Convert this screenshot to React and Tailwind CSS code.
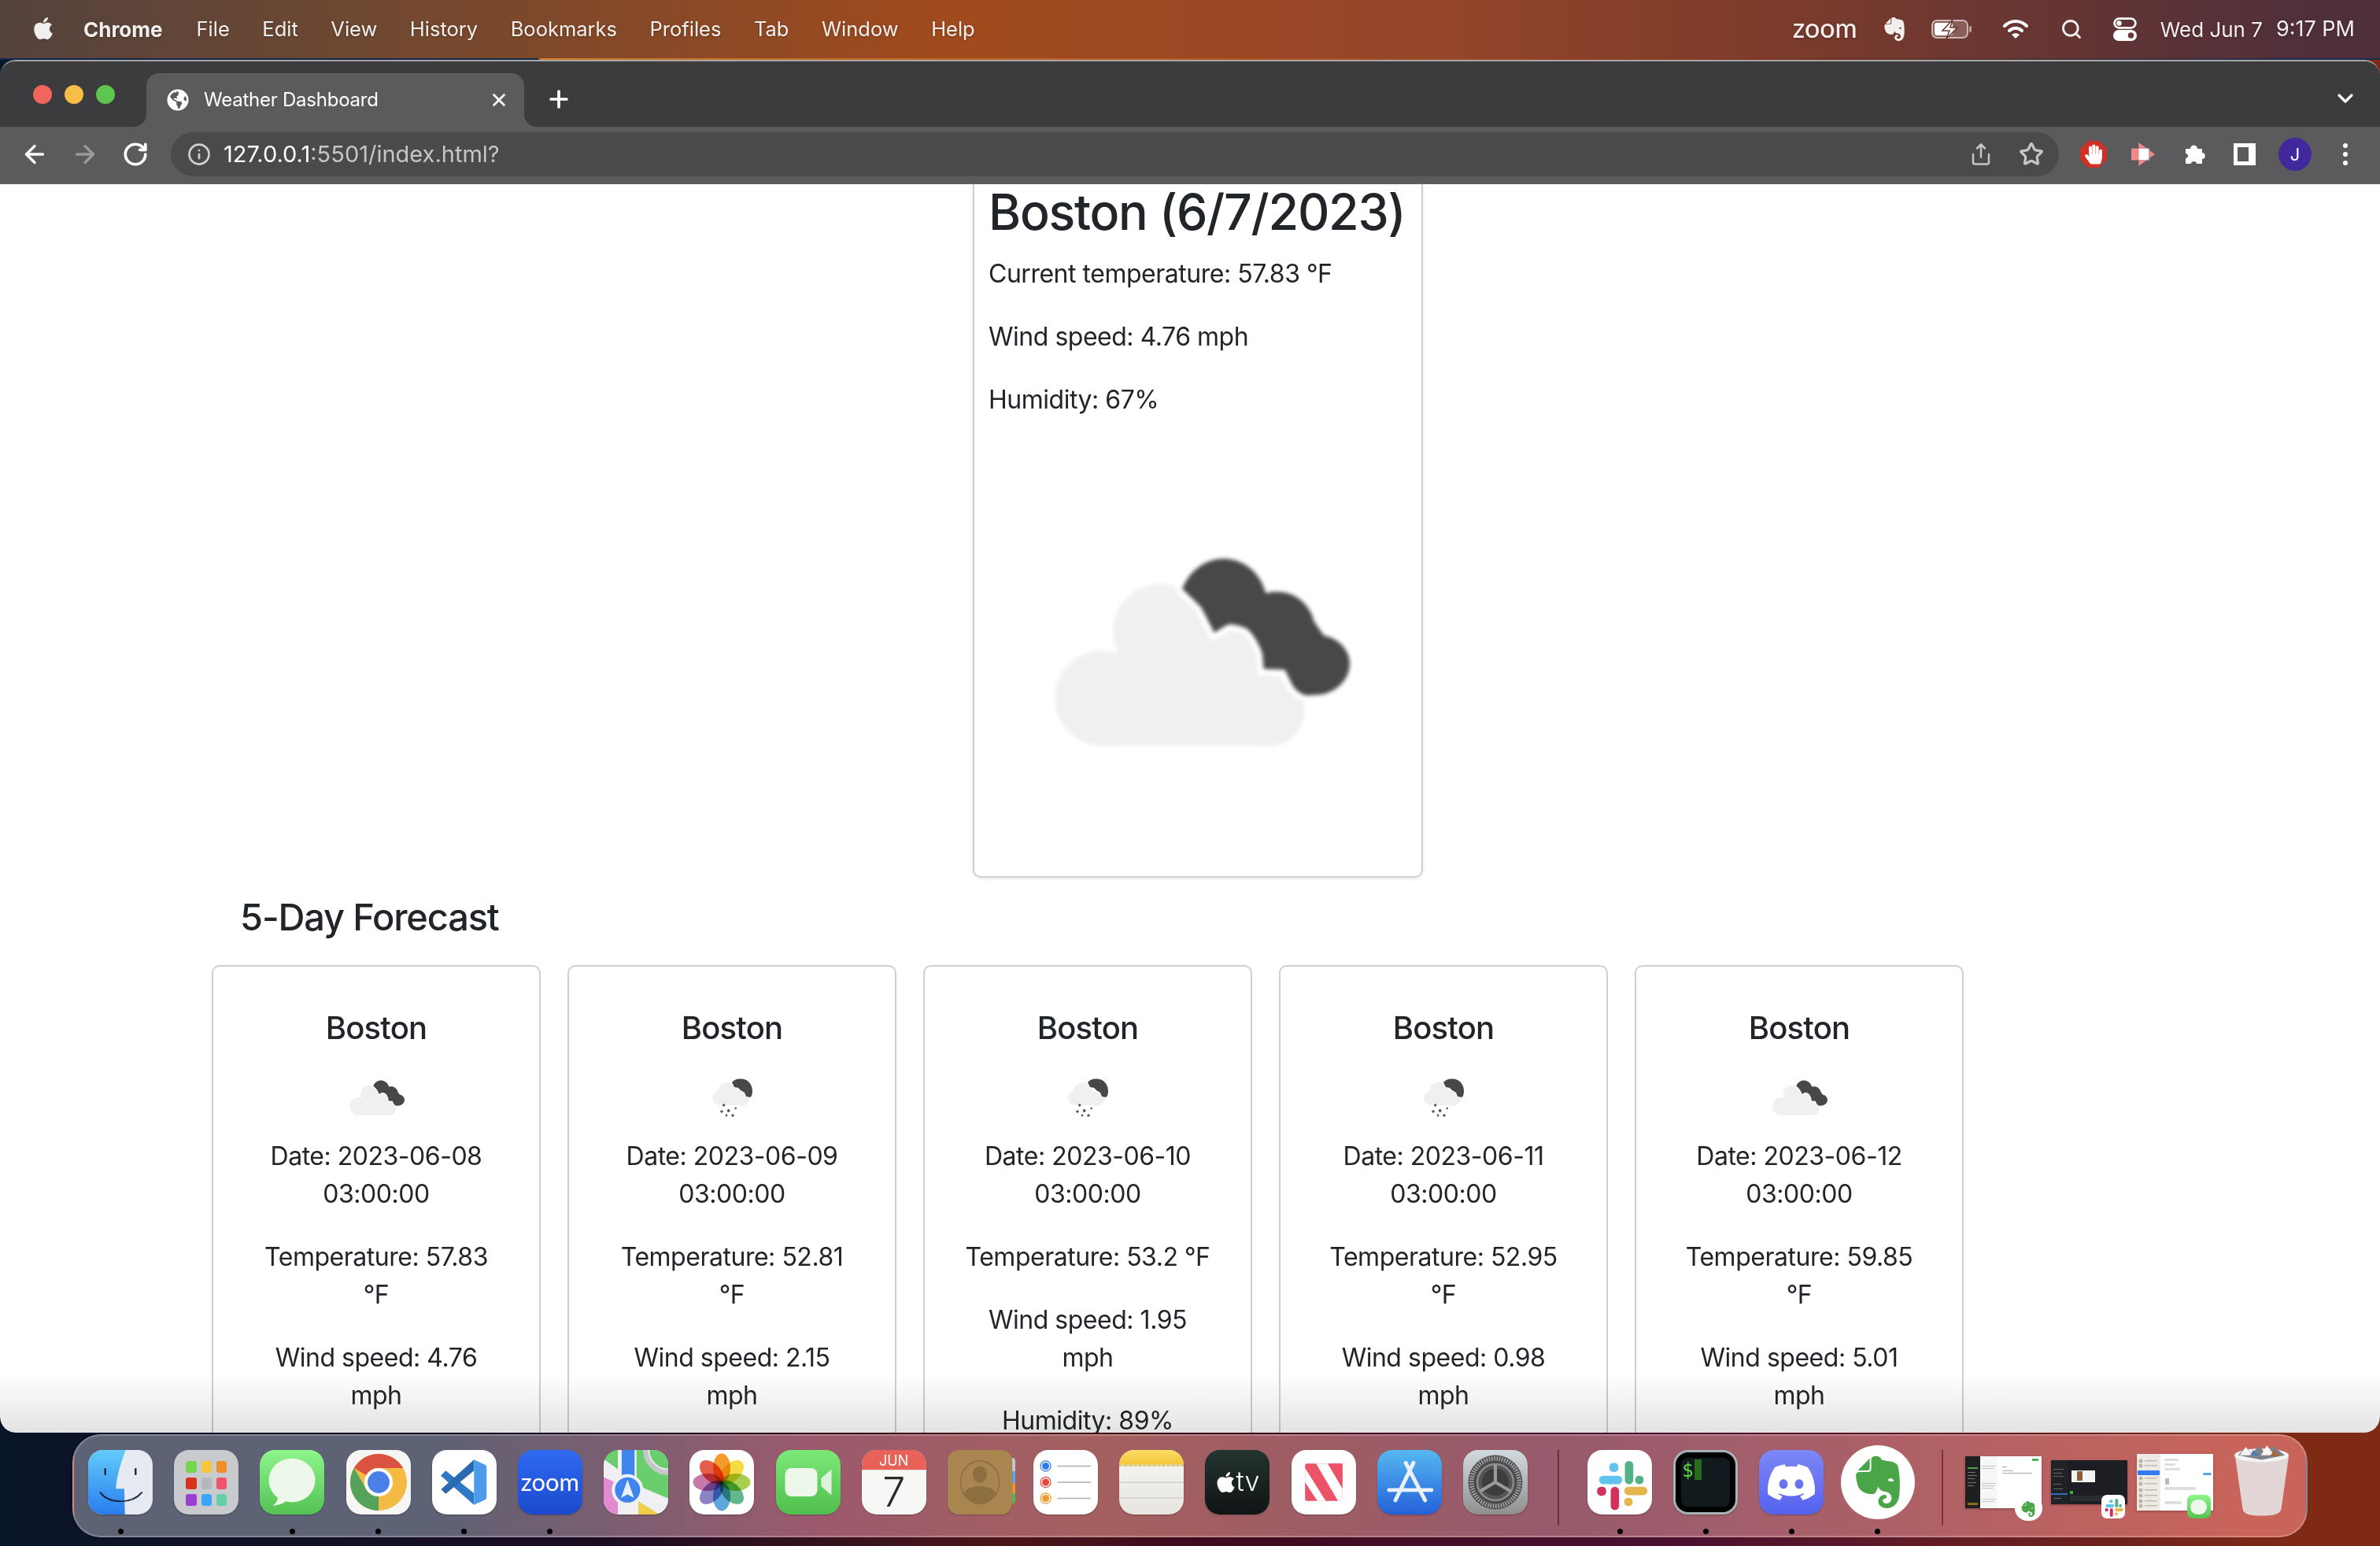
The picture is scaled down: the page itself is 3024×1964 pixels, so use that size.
import React from "react";
import {
  ArrowLeft,
  ArrowRight,
  RotateCw,
  Info,
  Share,
  Star,
  Plus,
  X,
  ChevronDown,
  Search,
} from "lucide-react";
import { FaApple, FaHandPaper, FaGlobeAmericas } from "react-icons/fa";
import { SiEvernote, SiDiscord } from "react-icons/si";

const forecast = [
  { date: "2023-06-08", temp: "57.83", wind: "4.76", humidity: "64", rain: false },
  { date: "2023-06-09", temp: "52.81", wind: "2.15", humidity: "88", rain: true },
  { date: "2023-06-10", temp: "53.2", wind: "1.95", humidity: "89", rain: true },
  { date: "2023-06-11", temp: "52.95", wind: "0.98", humidity: "91", rain: true },
  { date: "2023-06-12", temp: "59.85", wind: "5.01", humidity: "71", rain: false },
];

const menus = ["File", "Edit", "View", "History", "Bookmarks", "Profiles", "Tab", "Window", "Help"];

const DARK_CLOUD =
  "M46.3 34.5C48 30 52 27.4 56.2 27.4C61 27.4 65 31 66.1 35.6C68 35 70 35.2 71.4 35.6C74.5 36.5 77 39.5 77.5 42.2L79.8 45.5C84 46.5 86 49.5 86 52.1C86 56 83 59 79 59.6L76 59.8C74.5 59.6 73.5 58.8 72.5 57.5L70.6 53.7L65.6 53.5L65.3 49.9C64.5 47.5 63 45 61.5 43.9C59.5 43 57.5 42.8 56.9 43.1L53.9 44.9L50.8 38.9Z";

function CloudsIcon({ className }) {
  return (
    <svg viewBox="0 0 100 100" className={className}>
      <g fill="#f0f0f0">
        <circle cx="27.4" cy="60.5" r="11.3" />
        <circle cx="41" cy="44.5" r="11.1" />
        <circle cx="56" cy="54" r="10" />
        <circle cx="67" cy="63.5" r="8.3" />
        <rect x="27" y="50" width="40" height="21.8" />
      </g>
      <path d={DARK_CLOUD} fill="#fff" stroke="#fff" strokeWidth="3" />
      <path d={DARK_CLOUD} fill="#48484a" />
    </svg>
  );
}

function RainIcon({ className }) {
  const moon = "M50 30C53 26 58 25 62 25.5C71 26 76 33 76 41C76 45 75 48 73 49L68 48L66 43L61 40L58 37L53 36Z";
  return (
    <svg viewBox="0 0 100 100" className={className}>
      <g fill="#f0f0f0">
        <circle cx="34" cy="50" r="9" />
        <circle cx="44" cy="42" r="12" />
        <circle cx="62" cy="50" r="10" />
        <rect x="34" y="44" width="28" height="15" />
      </g>
      <path d={moon} fill="#fff" stroke="#fff" strokeWidth="2" />
      <path d={moon} fill="#48484a" />
      <g fill="#5a5a5c">
        <circle cx="39.7" cy="59" r="1.7" />
        <circle cx="37" cy="67" r="1.8" />
        <circle cx="45.7" cy="66" r="1.9" />
        <circle cx="54.7" cy="63" r="1.3" />
        <circle cx="43" cy="72" r="1.4" />
        <circle cx="51" cy="72" r="1.8" />
      </g>
    </svg>
  );
}

function MenuBar() {
  return (
    <div className="h-[74px] shrink-0 flex items-center pl-[40px] pr-[32px] text-[#f3efee] text-[25.5px] [text-shadow:0_1px_3px_rgba(0,0,0,0.3)] bg-[linear-gradient(90deg,#54423d_0%,#6e4831_15%,#a14a1d_40%,#95452a_60%,#7b3b2b_75%,#4e2f3b_98%)]">
      <FaApple className="w-[30px] h-[32px] mb-[3px]" />
      <span className="ml-[36px] mr-[43px] font-bold text-[26px]">Chrome</span>
      <div className="flex gap-[41.5px]">
        {menus.map((m) => (
          <span key={m}>{m}</span>
        ))}
      </div>
      <div className="flex-1" />
      <span className="text-[34px] font-medium font-['Lato',sans-serif] leading-none mb-[4px]">zoom</span>
      <SiEvernote className="ml-[32px] w-[30px] h-[32px]" />
      <svg viewBox="0 0 52 26" className="ml-[32px] w-[52px] h-[26px]">
        <rect x="1" y="2" width="45" height="22" rx="6" fill="#ffffff33" stroke="#ffffff99" strokeWidth="2" />
        <rect x="4" y="5" width="23" height="16" rx="3" fill="#fff" />
        <rect x="48" y="9" width="3" height="8" rx="1.5" fill="#ffffff88" />
        <path d="M27 1L14 15H23L19 25L33 11H24Z" fill="#fff" stroke="#6c3a30" strokeWidth="1.5" />
      </svg>
      <svg viewBox="0 0 34 26" className="ml-[38px] w-[34px] h-[26px]" fill="none" stroke="#fff" strokeWidth="4" strokeLinecap="round">
        <path d="M3 9C11 1 23 1 31 9" />
        <path d="M9 15C13.5 10.5 20.5 10.5 25 15" />
        <path d="M17 25L12 20C15 17.5 19 17.5 22 20Z" fill="#fff" stroke="none" />
      </svg>
      <Search className="ml-[40px] w-[28px] h-[28px]" strokeWidth={2.4} />
      <svg viewBox="0 0 28 28" className="ml-[39px] w-[30px] h-[30px]">
        <rect x="1.5" y="1.5" width="25" height="11" rx="5.5" fill="none" stroke="#fff" strokeWidth="2.5" />
        <circle cx="7" cy="7" r="3" fill="#fff" />
        <rect x="0" y="15" width="28" height="13" rx="6.5" fill="#fff" />
        <circle cx="21" cy="21.5" r="3.5" fill="#6b3a38" />
      </svg>
      <span className="ml-[30px] whitespace-pre text-[26px]">Wed Jun 7</span>
      <span className="ml-[17px] whitespace-pre text-[27px]">9:17 PM</span>
    </div>
  );
}

function TabStrip() {
  return (
    <div className="h-[83px] shrink-0 flex items-end pl-[42px] pr-[28px] bg-[#3c3b3e]">
      <div className="flex gap-[16px] mb-[29px]">
        <span className="w-[24px] h-[24px] rounded-full bg-[#f0665d]" />
        <span className="w-[24px] h-[24px] rounded-full bg-[#f7bd47]" />
        <span className="w-[24px] h-[24px] rounded-full bg-[#5ec551]" />
      </div>
      <div className="relative ml-[40px] w-[480px] h-[68px] rounded-t-[16px] bg-[#5b5a5d] flex items-center pl-[26px] pr-[19px] text-white">
        <span className="absolute -left-[16px] bottom-0 w-[16px] h-[16px] bg-[radial-gradient(circle_at_0_0,transparent_16px,#5b5a5d_16px)]" />
        <span className="absolute -right-[16px] bottom-0 w-[16px] h-[16px] bg-[radial-gradient(circle_at_100%_0,transparent_16px,#5b5a5d_16px)]" />
        <FaGlobeAmericas className="w-[28px] h-[28px]" />
        <span className="ml-[19px] text-[24px] tracking-[-0.01em]">Weather Dashboard</span>
        <div className="flex-1" />
        <X className="w-[26px] h-[26px]" strokeWidth={2.4} />
      </div>
      <Plus className="ml-[27px] mb-[18px] w-[34px] h-[34px] text-white" strokeWidth={2.6} />
      <div className="flex-1" />
      <ChevronDown className="mb-[20px] w-[32px] h-[32px] text-white" strokeWidth={2.4} />
    </div>
  );
}

function ToolButton({ children }) {
  return <div className="w-[64px] h-[56px] flex items-center justify-center">{children}</div>;
}

function Toolbar() {
  return (
    <div className="h-[73px] shrink-0 flex items-start pt-[7px] px-[12px] bg-[#5b5a5d] border-b-2 border-[#5f5e61]">
      <ToolButton>
        <ArrowLeft className="w-[36px] h-[36px] text-white" strokeWidth={2.2} />
      </ToolButton>
      <ToolButton>
        <ArrowRight className="w-[36px] h-[36px] text-[#9a999b]" strokeWidth={2.2} />
      </ToolButton>
      <ToolButton>
        <RotateCw className="w-[34px] h-[34px] text-white" strokeWidth={2.6} />
      </ToolButton>
      <div className="ml-[13px] flex-1 h-[56px] rounded-full bg-[#4a494c] flex items-center pl-[21px] pr-[3px]">
        <Info className="w-[30px] h-[30px] text-[#cfcfd0]" strokeWidth={2.2} />
        <span className="ml-[16px] text-[29px] text-white">
          127.0.0.1<span className="text-[#c6c6c8]">:5501/index.html?</span>
        </span>
        <div className="flex-1" />
        <ToolButton>
          <Share className="w-[30px] h-[30px] text-[#c6c6c8]" strokeWidth={2} />
        </ToolButton>
        <ToolButton>
          <Star className="w-[32px] h-[32px] text-[#c6c6c8]" strokeWidth={2.4} />
        </ToolButton>
      </div>
      <div className="ml-[12px] flex">
        <ToolButton>
          <div className="w-[34px] h-[34px] bg-[#d03026] flex items-center justify-center [clip-path:polygon(30%_0,70%_0,100%_30%,100%_70%,70%_100%,30%_100%,0_70%,0_30%)]">
            <FaHandPaper className="w-[22px] h-[26px] text-white" />
          </div>
        </ToolButton>
        <ToolButton>
          <svg viewBox="0 0 34 34" className="w-[32px] h-[32px]">
            <path d="M0 9H10V25H0Z" fill="#f08a88" />
            <path d="M10 9H24V25H10Z" fill="#fff" />
            <path d="M10 1L32 17L10 33V25H24V9H10Z" fill="#f08a88" />
          </svg>
        </ToolButton>
        <ToolButton>
          <svg viewBox="0 0 30 30" className="w-[30px] h-[30px]" fill="#fff">
            <path d="M4 8H10C10 2 19 2 19 8H25V13C30 13 30 21 25 21V27H18C18 23 11 23 11 27H4V20C8 20 8 14 4 14Z" />
          </svg>
        </ToolButton>
        <ToolButton>
          <div className="w-[28px] h-[28px] border-white border-l-[5px] border-y-[5px] border-r-[9px] bg-[#5b5a5d]" />
        </ToolButton>
        <ToolButton>
          <div className="w-[42px] h-[42px] rounded-full bg-[#41299d] text-white text-[22px] flex items-center justify-center">J</div>
        </ToolButton>
        <ToolButton>
          <div className="flex flex-col gap-[5px]">
            <span className="w-[6px] h-[6px] rounded-full bg-white" />
            <span className="w-[6px] h-[6px] rounded-full bg-white" />
            <span className="w-[6px] h-[6px] rounded-full bg-white" />
          </div>
        </ToolButton>
      </div>
    </div>
  );
}

function CurrentWeather() {
  return (
    <div className="ml-[1236px] -mt-[21px] w-[572px] h-[902px] shrink-0 border-2 border-[#cfcfcf] rounded-[10px] pt-[16px] pl-[18px] pr-[14px] shadow-[0_2px_4px_rgba(0,0,0,0.08)]">
      <h2 className="text-[62.7px] leading-[77px] font-medium mb-[16px] tracking-[-0.02em] whitespace-nowrap">Boston (6/7/2023)</h2>
      <p className="mb-[32px]">Current temperature: 57.83 °F</p>
      <p className="mb-[32px]">Wind speed: 4.76 mph</p>
      <p className="mb-[32px]">Humidity: 67%</p>
      <CloudsIcon className="-ml-[2px] -mt-[1px] w-[536px] h-[536px] blur-[2.5px]" />
    </div>
  );
}

function ForecastCard({ day }) {
  return (
    <div className="w-[418px] h-[760px] shrink-0 border-2 border-[#cfcfcf] rounded-[10px] pt-[54px] px-[48px] text-center">
      <h5 className="text-[40px] leading-[48px] font-medium mb-[15px] tracking-[-0.02em]">Boston</h5>
      <div className="flex justify-center h-[100px]">
        {day.rain ? <RainIcon className="w-[100px] h-[100px] blur-[0.6px]" /> : <CloudsIcon className="w-[100px] h-[100px] blur-[0.6px]" />}
      </div>
      <p className="mb-[32px]">Date: {day.date} 03:00:00</p>
      <p className="mb-[32px]">Temperature: {day.temp} °F</p>
      <p className="mb-[32px]">Wind speed: {day.wind} mph</p>
      <p className="mb-[32px]">Humidity: {day.humidity}%</p>
    </div>
  );
}

function Page() {
  return (
    <div className="relative flex-1 bg-white overflow-hidden text-[#212529] text-[32px] leading-[48px] tracking-[-0.015em] rounded-b-[20px]">
      <CurrentWeather />
      <h4 className="ml-[305px] mt-[21px] text-[47px] leading-[58px] font-medium tracking-[-0.025em]">5-Day Forecast</h4>
      <div className="mt-[32px] ml-[269px] flex gap-[34px]">
        {forecast.map((day) => (
          <ForecastCard key={day.date} day={day} />
        ))}
      </div>
      <div className="absolute inset-x-0 bottom-0 h-[76px] bg-[linear-gradient(180deg,rgba(0,0,0,0),rgba(0,0,0,0.11))]" />
    </div>
  );
}

function Squircle({ className = "", children }) {
  return <div className={`w-[82px] h-[82px] rounded-[19px] overflow-hidden relative shrink-0 shadow-[0_1px_2px_rgba(0,0,0,0.25)] ${className}`}>{children}</div>;
}

const Finder = () => (
  <Squircle>
    <svg viewBox="0 0 100 100" className="w-full h-full">
      <defs>
        <linearGradient id="finderL" x1="0" y1="0" x2="0" y2="1">
          <stop offset="0" stopColor="#62cbfb" />
          <stop offset="1" stopColor="#2a7cee" />
        </linearGradient>
      </defs>
      <rect width="100" height="100" fill="#e6eaf2" />
      <path d="M0 0H58C50 22 44 42 43 60H56L57 100H0Z" fill="url(#finderL)" />
      <rect x="25" y="28" width="3" height="11" rx="1.5" fill="#1c2a44" />
      <rect x="72" y="28" width="3" height="11" rx="1.5" fill="#1c2a44" />
      <path d="M19 66C32 84 68 84 83 66" fill="none" stroke="#1c2a44" strokeWidth="2.5" strokeLinecap="round" />
    </svg>
  </Squircle>
);

const Launchpad = () => {
  const cells = ["#74d64f", "#f7c53a", "#ee8f2c", "#d8321f", "#b4b8bb", "#f1536a", "#9a3fd0", "#39a5fb", "#62d1ab"];
  return (
    <Squircle className="bg-[#c9cace]">
      <div className="grid grid-cols-3 gap-[6px] p-[15px] pt-[14px]">
        {cells.map((c) => (
          <span key={c} className="h-[15px] rounded-[3px]" style={{ background: c }} />
        ))}
      </div>
    </Squircle>
  );
};

const Messages = () => (
  <Squircle className="bg-[linear-gradient(180deg,#8df58a,#55c254)]">
    <svg viewBox="0 0 100 100" className="w-full h-full">
      <ellipse cx="50" cy="47" rx="36" ry="34" fill="#eef8ea" />
      <path d="M28 72C28 80 24 84 20 86C30 86 38 82 42 78Z" fill="#eef8ea" />
    </svg>
  </Squircle>
);

const Chrome = () => (
  <Squircle className="bg-[#f6f6f4]">
    <svg viewBox="0 0 100 100" className="w-full h-full">
      <circle cx="50" cy="50" r="44" fill="#f3bb43" />
      <path d="M12 28A44 44 0 0 1 88 28H50A22 22 0 0 0 31 39Z" fill="#da5340" />
      <path d="M50 94A44 44 0 0 1 12 28L31 61A22 22 0 0 0 50 72Z" fill="#55a35a" />
      <circle cx="50" cy="50" r="22" fill="#fff" />
      <circle cx="50" cy="50" r="17" fill="#4a80e8" />
    </svg>
  </Squircle>
);

const VSCode = () => (
  <Squircle className="bg-white">
    <svg viewBox="0 0 100 100" className="w-full h-full">
      <path d="M13.5 40L21 32L65 67V85Z" fill="#3078c4" />
      <path d="M65 15L14 61L21 68L65 32Z" fill="#2a6bb0" />
      <path d="M65 15L82 23C84 24 84.5 25.5 84.5 27V73C84.5 74.5 84 76 82 77L65 85Z" fill="#4b9bea" />
    </svg>
  </Squircle>
);

const ZoomApp = () => (
  <Squircle className="bg-[linear-gradient(180deg,#2e6af0,#1c49cc)] flex items-center justify-center">
    <span className="text-white text-[31px] font-['Lato',sans-serif] leading-none mb-[2px]">zoom</span>
  </Squircle>
);

const Maps = () => (
  <Squircle className="bg-[#6bce6e]">
    <svg viewBox="0 0 100 100" className="w-full h-full">
      <path d="M0 14L22 30V100H0Z" fill="#f0f0f2" />
      <path d="M0 42L22 52V100H0Z" fill="#e28bd1" />
      <rect x="22" y="0" width="6" height="62" fill="#f0f0f2" />
      <rect x="28" y="0" width="20" height="62" fill="#3f85ee" />
      <rect x="48" y="0" width="3" height="62" fill="#f0f0f2" />
      <rect x="22" y="62" width="32" height="38" fill="#f0f0f2" />
      <path d="M40 50L100 75V100H86L54 80H40Z" fill="#f0f0f2" />
      <path d="M54 80L86 100H54Z" fill="#f5cf45" />
      <circle cx="100" cy="0" r="38" fill="#f0f0f2" />
      <circle cx="100" cy="0" r="35" fill="none" stroke="#c4c6cc" strokeWidth="8" />
      <circle cx="100" cy="0" r="29" fill="#6bce6e" />
      <circle cx="37" cy="62" r="22" fill="#3f85ee" stroke="#eef1f4" strokeWidth="5" />
      <path d="M37 46L47 74L37 69L27 74Z" fill="#e9eef7" />
    </svg>
  </Squircle>
);

const Photos = () => {
  const petals = [
    ["#f39c2c", 0],
    ["#f5dc42", 45],
    ["#a8cf4f", 90],
    ["#62b88a", 135],
    ["#5ea6db", 180],
    ["#8b84c7", 225],
    ["#c978ac", 270],
    ["#e75c4a", 315],
  ];
  return (
    <Squircle className="bg-white">
      <svg viewBox="0 0 100 100" className="w-full h-full">
        {petals.map(([c, r]) => (
          <ellipse key={r} cx="50" cy="28" rx="13.5" ry="22.5" fill={c} className="mix-blend-multiply" transform={`rotate(${r} 50 50)`} />
        ))}
      </svg>
    </Squircle>
  );
};

const FaceTime = () => (
  <Squircle className="bg-[linear-gradient(180deg,#7ce878,#4fbf4e)]">
    <svg viewBox="0 0 100 100" className="w-full h-full">
      <rect x="14" y="28" width="50" height="44" rx="10" fill="#eef8ea" />
      <path d="M70 44L86 30V70L70 56Z" fill="#dff2da" />
    </svg>
  </Squircle>
);

const Calendar = () => (
  <Squircle className="bg-[#f7f7f5]">
    <div className="h-[25px] bg-[#e86258] text-white text-[18px] leading-[27px] text-center">JUN</div>
    <div className="border-t border-[#ddd] text-[#2a2a2a] text-[52px] leading-[56px] font-light text-center">7</div>
  </Squircle>
);

const Contacts = () => (
  <div className="relative w-[82px] h-[82px] shrink-0">
    <div className="absolute right-[-4px] top-[10px] w-[10px] h-[58px] rounded-r-[4px] bg-[linear-gradient(180deg,#c8c8c8_0_30%,#5da8e0_30%_55%,#f0962c_55%_78%,#58b858_78%)]" />
    <div className="absolute inset-0 rounded-[14px] bg-[#a98650] flex items-center justify-center shadow-[0_1px_2px_rgba(0,0,0,0.25)]">
      <svg viewBox="0 0 100 100" className="w-full h-full">
        <ellipse cx="50" cy="50" rx="30" ry="33" fill="none" stroke="#8e6f40" strokeWidth="2" />
        <ellipse cx="50" cy="38" rx="11" ry="13" fill="#8e6f40" />
        <path d="M25 68C30 52 70 52 75 68C68 80 58 83 50 83C42 83 32 80 25 68Z" fill="#8e6f40" />
      </svg>
    </div>
  </div>
);

const Reminders = () => (
  <Squircle className="bg-white">
    <svg viewBox="0 0 100 100" className="w-full h-full">
      {[
        [25, "#2f7cf0"],
        [50, "#e8483c"],
        [75, "#ef9a2d"],
      ].map(([y, c]) => (
        <g key={y}>
          <circle cx="19" cy={y} r="8" fill="none" stroke={c} strokeWidth="1.5" />
          <circle cx="19" cy={y} r="5.5" fill={c} />
          <rect x="37" y={y - 1} width="52" height="2" fill="#b5b5b5" />
        </g>
      ))}
    </svg>
  </Squircle>
);

const Notes = () => (
  <Squircle className="bg-[linear-gradient(180deg,#f8f7f4,#e6e5e0)]">
    <div className="h-[21px] bg-[linear-gradient(180deg,#fbdc67,#f5c63a)] border-b-[3px] border-dotted border-[#c9c5ba]" />
    <div className="mt-[19px] h-[2px] bg-[#d8d7d3]" />
    <div className="mt-[18px] h-[2px] bg-[#d8d7d3]" />
  </Squircle>
);

const AppleTv = () => (
  <Squircle className="bg-[linear-gradient(180deg,#243430,#101414)] flex items-center justify-center text-white">
    <FaApple className="w-[25px] h-[30px]" />
    <span className="text-[34px] leading-none ml-[1px] mb-[3px] font-light">tv</span>
  </Squircle>
);

const News = () => (
  <Squircle className="bg-white">
    <svg viewBox="0 0 100 100" className="w-full h-full">
      <rect x="21" y="21" width="58" height="58" rx="3" fill="#ec5368" />
      <path d="M21 28L53 79H40L21 50Z" fill="#fff" />
      <path d="M38 21H56L79 60V79H72Z" fill="#fff" />
      <path d="M60 21H79V52Z" fill="#ec5368" />
    </svg>
  </Squircle>
);

const AppStore = () => (
  <Squircle className="bg-[linear-gradient(180deg,#55b8f1,#2560d8)]">
    <svg viewBox="0 0 100 100" className="w-full h-full" fill="none" stroke="#e9f2fb" strokeWidth="6" strokeLinecap="round">
      <path d="M56 20L28 78" />
      <path d="M44 20L74 78" />
      <path d="M18 62H84" />
    </svg>
  </Squircle>
);

const SystemPrefs = () => (
  <Squircle className="bg-[linear-gradient(180deg,#d3dadd,#8f8f8f)]">
    <svg viewBox="0 0 100 100" className="w-full h-full">
      <circle cx="50" cy="50" r="42" fill="#4b4b4d" />
      <circle cx="50" cy="50" r="37" fill="none" stroke="#a5a5a7" strokeWidth="7" strokeDasharray="2 2" />
      <circle cx="50" cy="50" r="28" fill="#555557" stroke="#8c8c8e" strokeWidth="3" />
      <circle cx="50" cy="50" r="21" fill="#3d3d3f" />
      <g stroke="#9a9a9c" strokeWidth="5">
        <path d="M50 50V22" />
        <path d="M50 50L26 64" />
        <path d="M50 50L74 64" />
      </g>
    </svg>
  </Squircle>
);

function SlackLogo() {
  return (
    <svg viewBox="0 0 100 100" className="w-full h-full">
      <rect x="18" y="40" width="36" height="13" rx="6.5" fill="#62c4ee" />
      <rect x="34" y="20" width="14" height="14" rx="6" fill="#62c4ee" />
      <rect x="58" y="17" width="13" height="36" rx="6.5" fill="#53b285" />
      <rect x="74" y="40" width="13" height="13" rx="6" fill="#53b285" />
      <rect x="36" y="57" width="13" height="36" rx="6.5" fill="#d2315d" />
      <rect x="15" y="57" width="14" height="14" rx="6" fill="#d2315d" />
      <rect x="57" y="57" width="36" height="13" rx="6.5" fill="#e4b64c" />
      <rect x="57" y="74" width="13" height="13" rx="6" fill="#e4b64c" />
    </svg>
  );
}

const Slack = () => (
  <Squircle className="bg-white">
    <SlackLogo />
  </Squircle>
);

const Terminal = () => (
  <Squircle className="bg-black border-[3px] border-[#a6b3b7]">
    <div className="absolute inset-[7px] rounded-[8px] bg-[#121a1e] flex items-start pl-[6px] text-[#61d943] text-[24px] leading-[32px] font-['DejaVu_Sans_Mono',monospace]">
      <span className="-ml-[5px]">$</span>
      <span className="ml-[1px] mt-[2px] w-[9px] h-[26px] bg-[#2a6b22]" />
    </div>
  </Squircle>
);

const Discord = () => (
  <Squircle className="bg-[linear-gradient(180deg,#7d87f5,#5562ee)] flex items-center justify-center">
    <SiDiscord className="w-[60px] h-[60px] text-white" />
  </Squircle>
);

const Evernote = () => (
  <div className="w-[94px] h-[94px] -my-[6px] -mx-[6px] rounded-full bg-white shrink-0 flex items-center justify-center">
    <SiEvernote className="w-[66px] h-[72px] text-[#4aa548]" />
  </div>
);

function DockItem({ running, children }) {
  return (
    <div className="flex flex-col items-center shrink-0">
      {children}
      <span className={`mt-[18px] w-[7px] h-[7px] rounded-full ${running ? "bg-black" : "bg-transparent"}`} />
    </div>
  );
}

// minimised window previews at the right of the dock
function EvernoteThumb() {
  return (
    <svg viewBox="0 0 97 66" className="w-full h-full">
      <rect width="97" height="66" fill="#fff" />
      <rect width="19" height="66" fill="#1d1f20" />
      <rect x="3" y="14" width="13" height="2" fill="#4aa548" />
      <g fill="#777">
        <rect x="3" y="20" width="10" height="1" />
        <rect x="3" y="24" width="12" height="1" />
        <rect x="3" y="28" width="9" height="1" />
        <rect x="3" y="33" width="11" height="1" />
        <rect x="3" y="37" width="8" height="1" />
      </g>
      <rect x="3" y="59" width="13" height="3" fill="#8a6d1c" />
      <rect x="19" width="22" height="66" fill="#f7f7f7" />
      <g fill="#c4c4c4">
        <rect x="21" y="12" width="18" height="1" />
        <rect x="21" y="15" width="16" height="1" />
        <rect x="21" y="34" width="18" height="1" />
        <rect x="21" y="37" width="17" height="1" />
        <rect x="21" y="40" width="15" height="1" />
        <rect x="21" y="54" width="18" height="1" />
        <rect x="21" y="57" width="16" height="1" />
      </g>
      <rect x="47" y="13" width="6" height="1" fill="#aaa" />
      <rect x="47" y="18" width="14" height="1" fill="#aaa" />
      <rect x="47" y="21" width="38" height="1" fill="#aaa" />
      <rect x="85" y="3" width="8" height="3" fill="#55b04f" />
    </svg>
  );
}

function SlackThumb() {
  return (
    <svg viewBox="0 0 97 56" className="w-full h-full">
      <rect width="97" height="56" fill="#1c1e23" />
      <rect width="21" height="56" fill="#202227" />
      <rect y="42" width="21" height="2" fill="#2f6fb8" />
      <g fill="#666">
        <rect x="3" y="11" width="13" height="1" />
        <rect x="3" y="16" width="11" height="1" />
        <rect x="3" y="20" width="13" height="1" />
        <rect x="3" y="30" width="10" height="1" />
        <rect x="3" y="36" width="12" height="1" />
        <rect x="3" y="48" width="10" height="1" />
      </g>
      <rect x="26" y="13" width="30" height="15" fill="#f4f4f4" />
      <rect x="33" y="14" width="7" height="12" fill="#8b5e34" />
      <rect x="24" y="39" width="4" height="4" fill="#4aa548" />
      <rect x="24" y="45" width="60" height="7" fill="#2a2c31" />
    </svg>
  );
}

function MessagesThumb() {
  return (
    <svg viewBox="0 0 97 72" className="w-full h-full">
      <rect width="97" height="72" fill="#fff" />
      <rect width="30" height="72" fill="#efe9e4" />
      <rect x="1" y="21" width="28" height="6" rx="1" fill="#2f7cf0" />
      {[9, 15, 31, 38, 46, 53, 60, 66].map((y) => (
        <g key={y}>
          <circle cx="5" cy={y} r="2.5" fill="#b9b4b0" />
          <rect x="10" y={y - 1} width="16" height="1.5" fill="#bfbab5" />
        </g>
      ))}
      <g fill="#dedede">
        <rect x="35" y="6" width="18" height="3" rx="1.5" />
        <rect x="35" y="12" width="14" height="3" rx="1.5" />
        <rect x="35" y="18" width="20" height="3" rx="1.5" />
        <rect x="35" y="42" width="40" height="4" rx="2" />
        <rect x="35" y="60" width="22" height="4" rx="2" />
      </g>
      <rect x="84" y="24" width="11" height="3" rx="1.5" fill="#5aa6ee" />
      <rect x="36" y="31" width="5" height="8" fill="#bbb" />
    </svg>
  );
}

function Dock() {
  return (
    <div className="mx-[92px] mt-[2px] h-[131px] rounded-[36px] border-2 border-[#ffffff3d] flex items-start pt-[18px] pl-[18px] bg-[linear-gradient(90deg,#5d6274_0%,#5d6274_16%,#9b5a6d_33%,#a4605f_46%,#975a6c_66%,#a45f6b_76%,#c8645a_97%)]">
      <div className="flex gap-[27.2px]">
        <DockItem running><Finder /></DockItem>
        <DockItem><Launchpad /></DockItem>
        <DockItem running><Messages /></DockItem>
        <DockItem running><Chrome /></DockItem>
        <DockItem running><VSCode /></DockItem>
        <DockItem running><ZoomApp /></DockItem>
        <DockItem><Maps /></DockItem>
        <DockItem><Photos /></DockItem>
        <DockItem><FaceTime /></DockItem>
        <DockItem><Calendar /></DockItem>
        <DockItem><Contacts /></DockItem>
        <DockItem><Reminders /></DockItem>
        <DockItem><Notes /></DockItem>
        <DockItem><AppleTv /></DockItem>
        <DockItem><News /></DockItem>
        <DockItem><AppStore /></DockItem>
        <DockItem><SystemPrefs /></DockItem>
      </div>
      <div className="ml-[38px] w-[2px] h-[96px] bg-[#6e2a45]" />
      <div className="ml-[36px] flex gap-[27.2px]">
        <DockItem running><Slack /></DockItem>
        <DockItem running><Terminal /></DockItem>
        <DockItem running><Discord /></DockItem>
        <DockItem running><Evernote /></DockItem>
      </div>
      <div className="ml-[40px] w-[2px] h-[96px] bg-[#7b3340]" />
      <div className="ml-[28px] flex gap-[12px] items-start">
        <div className="relative w-[97px] h-[82px] shrink-0 pt-[8px]">
          <div className="h-[66px] overflow-hidden shadow-[0_1px_3px_rgba(0,0,0,0.3)]"><EvernoteThumb /></div>
          <div className="absolute -right-[1px] -bottom-[8px] w-[35px] h-[31px] rounded-b-[16px] rounded-t-[14px] bg-white flex items-center justify-center">
            <SiEvernote className="w-[20px] h-[24px] text-[#4aa548]" />
          </div>
        </div>
        <div className="relative w-[97px] h-[82px] shrink-0 pt-[13px]">
          <div className="h-[56px] overflow-hidden shadow-[0_1px_3px_rgba(0,0,0,0.3)]"><SlackThumb /></div>
          <div className="absolute right-[3px] -bottom-[5px] w-[30px] h-[30px] rounded-[7px] bg-white overflow-hidden">
            <SlackLogo />
          </div>
        </div>
        <div className="relative w-[97px] h-[82px] shrink-0 pt-[5px]">
          <div className="h-[72px] overflow-hidden shadow-[0_1px_3px_rgba(0,0,0,0.3)]"><MessagesThumb /></div>
          <div className="absolute right-[3px] -bottom-[5px] w-[30px] h-[30px] rounded-[7px] bg-[linear-gradient(180deg,#8df58a,#55c254)] flex items-center justify-center">
            <span className="w-[21px] h-[19px] rounded-full bg-[#eef8ea]" />
          </div>
        </div>
        <svg viewBox="0 0 75 96" className="ml-[14px] w-[72px] h-[95px] -mt-[9px]">
          <path d="M2 16L12 86C13 92 20 95 37 95C54 95 62 92 63 86L73 16Z" fill="#e6e6e8" fillOpacity="0.88" />
          <ellipse cx="37" cy="15" rx="36" ry="9" fill="#f3f3f4" />
          <path d="M6 15L16 4L24 13L34 2L42 13L52 3L68 15L37 21Z" fill="#7c8088" />
          <path d="M16 4L25 15H8Z" fill="#f5f5f5" />
          <path d="M44 2L54 15H36Z" fill="#f5f5f5" />
          <path d="M26 8L34 15H22Z" fill="#4a7fb0" />
          <path d="M54 8L62 16H48Z" fill="#a8683a" />
        </svg>
      </div>
    </div>
  );
}

export default function App() {
  return (
    <div className="w-[3024px] h-[1964px] flex flex-col overflow-hidden font-['Inter','Liberation_Sans',sans-serif] bg-[linear-gradient(90deg,#081428_0%,#1b0c22_25%,#4a1518_42%,#3d0b1e_50%,#4a1030_70%,#7f2a14_97%)]">
      <MenuBar />
      <div className="h-[2px] shrink-0 bg-[linear-gradient(90deg,#16294d_0%,#16294d_22.6%,#d08030_22.7%,#b85a20_50%,#7a3522_75%,#1a2c50_98%)]" />
      <div className="h-[1744px] shrink-0 flex flex-col rounded-[20px] overflow-hidden border-t-2 border-[#a5a5a5]">
        <TabStrip />
        <Toolbar />
        <Page />
      </div>
      <Dock />
    </div>
  );
}
